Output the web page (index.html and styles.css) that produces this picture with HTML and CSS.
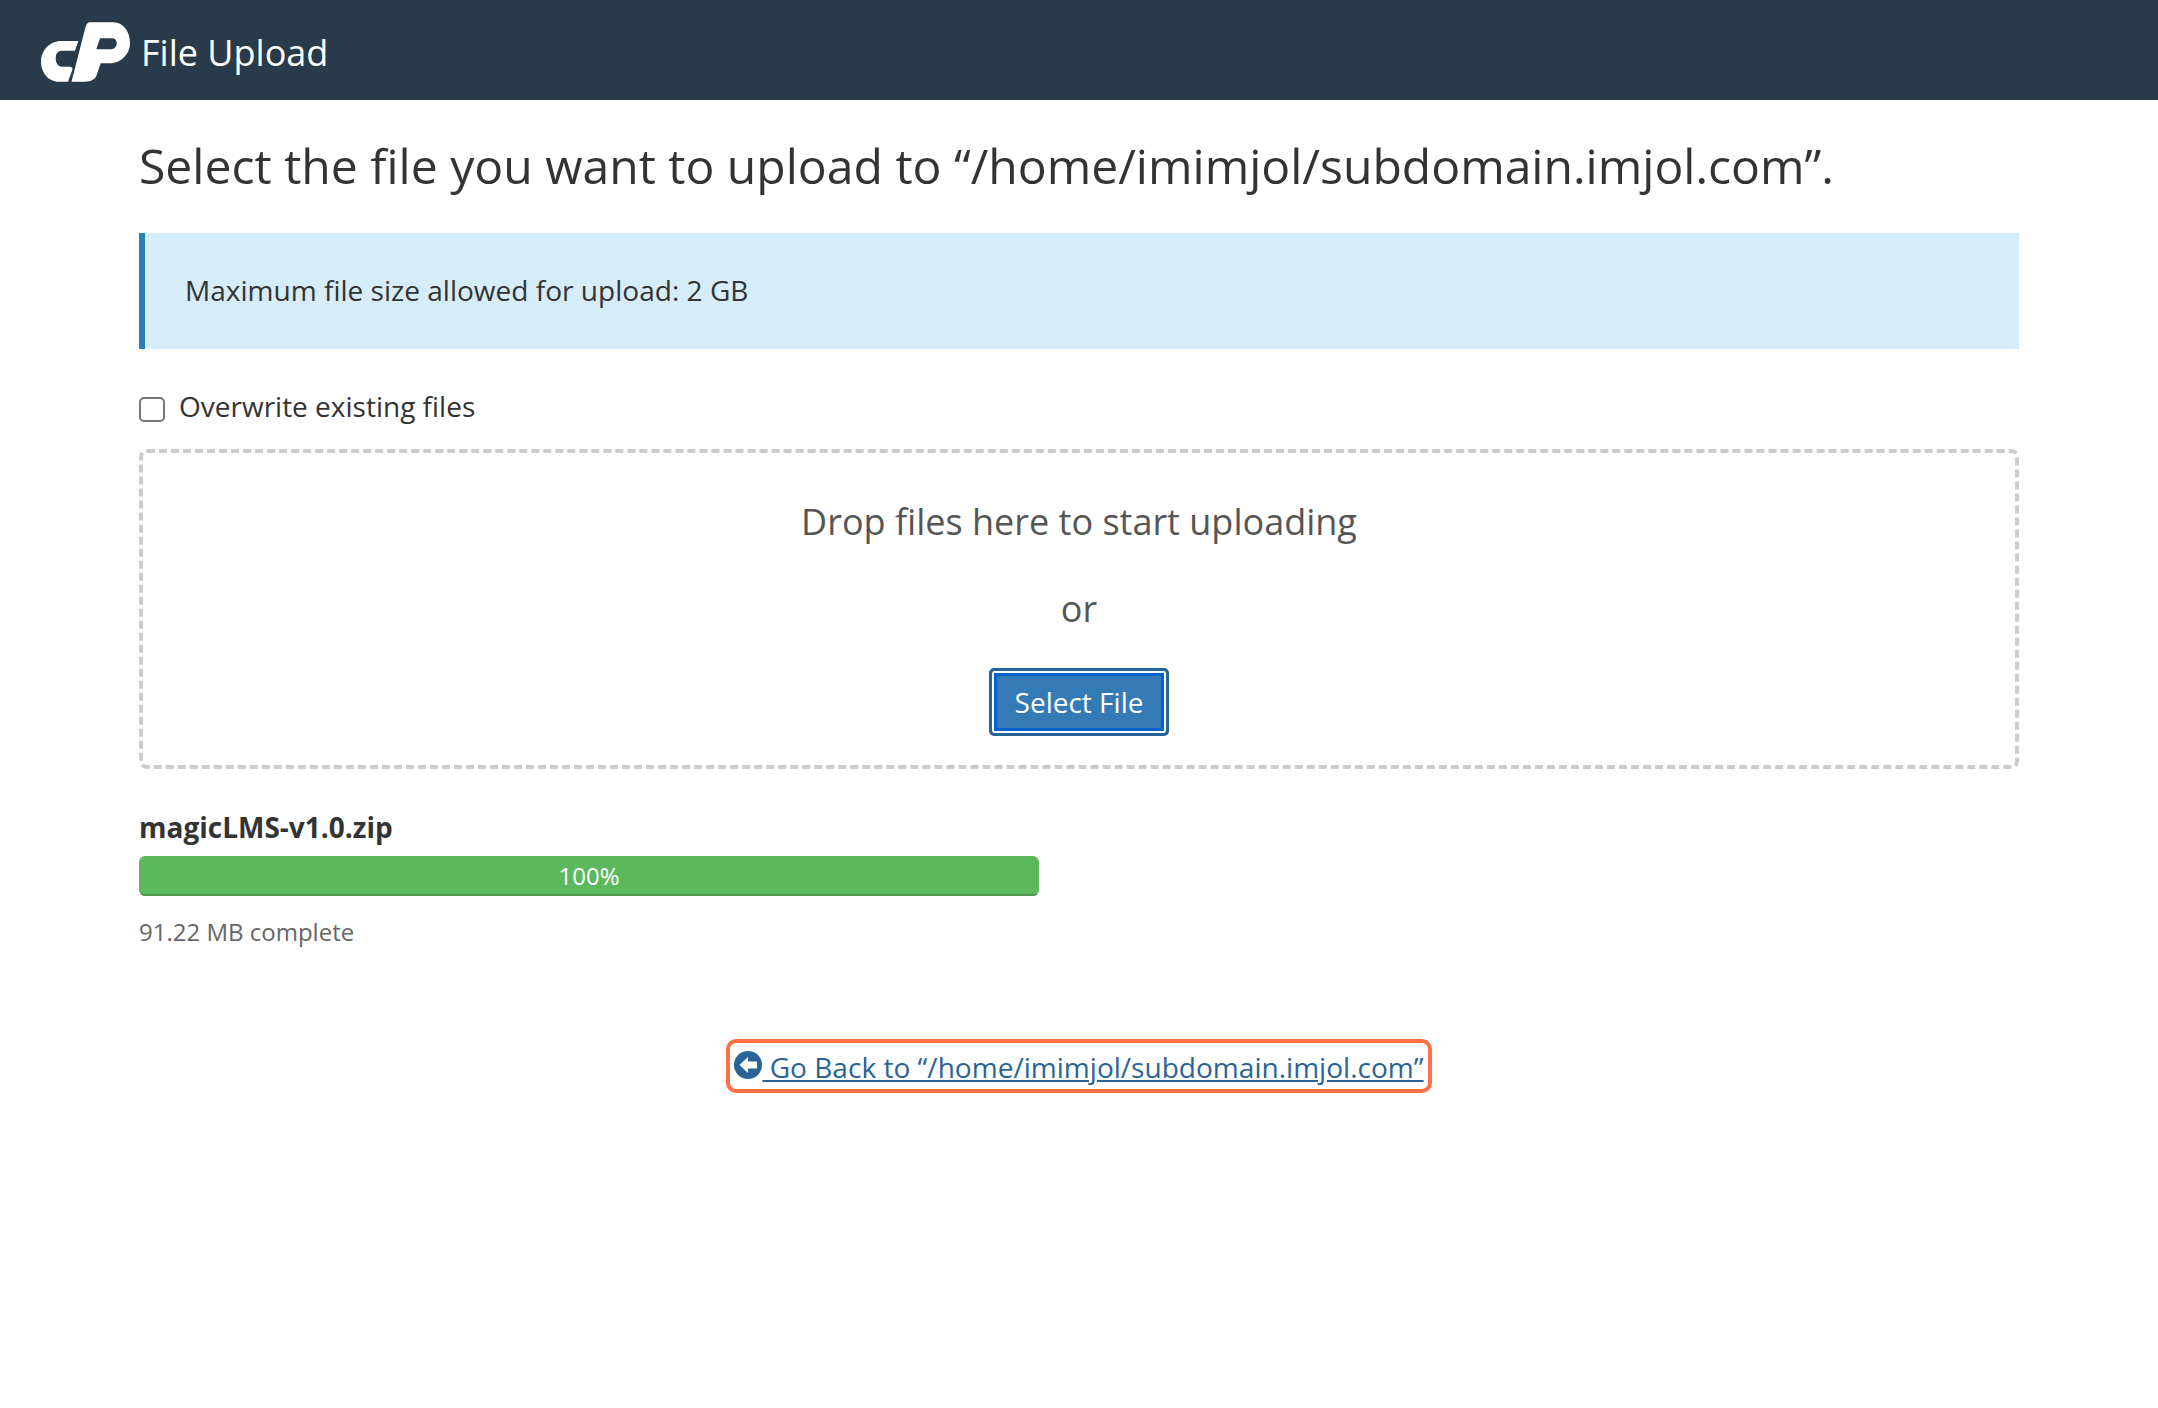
FILE: index.html
```html
<!DOCTYPE html>
<html lang="en">
<head>
    <meta charset="UTF-8">
    <title>File Upload</title>
    <link rel="stylesheet" href="styles.css">
</head>
<body>
    <header class="top-bar">
        <svg class="logo" viewBox="6 7 90 60" aria-hidden="true">
            <path fill="#fff" d="M43.3 26L40 35.7H27C22.5 35.7 20.7 39 20.7 43.5C20.7 48 23 51.7 27 51.7H34.5C37 51.7 38 53 37.3 55L33 66.7H24C13 66.7 6 57 6 46.7C6 35 15 26 26 26Z"/>
            <path fill="#fff" fill-rule="evenodd" d="M55 7.3H78.3C88 7.3 95 16 95 28.3C95 39 86 48.3 75 48.3H65.7L61.7 60C60.5 64 56 66.7 50 66.7H36.5L50 14C51 10 52.5 7.3 55 7.3ZM65 23.3L61.3 34.3H75C79 34.3 81.7 32 81.7 28.5C81.7 25.5 80 23.3 77.3 23.3Z"/>
        </svg>
        <span class="top-title">File Upload</span>
    </header>

    <main class="content">
        <h1 class="page-title">Select the file you want to upload to “/home/imimjol/subdomain.imjol.com”.</h1>

        <div class="notice">Maximum file size allowed for upload: 2 GB</div>

        <label class="overwrite">
            <input type="checkbox" class="overwrite-box">
            <span>Overwrite existing files</span>
        </label>

        <section class="drop-zone">
            <p class="drop-text">Drop files here to start uploading</p>
            <p class="drop-or">or</p>
            <button class="select-btn">Select File</button>
        </section>

        <section class="upload-item">
            <div class="file-name">magicLMS-v1.0.zip</div>
            <div class="progress">
                <div class="progress-fill" style="width: 100%">100%</div>
            </div>
            <div class="file-status">91.22 MB complete</div>
        </section>

        <div class="back-row">
            <a class="back-link" href="#">
                <svg class="back-icon" viewBox="0 0 28 28" aria-hidden="true">
                    <circle cx="14" cy="14" r="14" fill="#2a6496"/>
                    <path fill="#fff" d="M14 6L5.5 14L14 22V17.5H23V10.5H14Z"/>
                </svg>
                <span> Go Back to “/home/imimjol/subdomain.imjol.com”</span>
            </a>
        </div>
    </main>
</body>
</html>
```

FILE: styles.css
```css
* {
    box-sizing: border-box;
}
body {
    margin: 0;
    background: #fff;
    color: #333;
    font-family: "Open Sans", sans-serif;
}
.top-bar {
    display: flex;
    align-items: center;
    height: 100px;
    padding: 4px 0 0 41px;
    background: #293a4a;
    color: #fff;
}
.logo {
    width: 90px;
    height: 60px;
    margin-right: 10px;
}
.top-title {
    font-size: 36px;
}
.content {
    padding: 0 139px;
}
.page-title {
    margin: 0;
    padding-top: 33px;
    font-size: 48.08px;
    font-weight: 400;
    line-height: 66px;
}
.notice {
    display: flex;
    align-items: center;
    height: 116px;
    margin-top: 34px;
    padding: 0 0 2px 40px;
    border-left: 6px solid #2980b9;
    background: #d6ecf9;
    font-size: 28.06px;
}
.overwrite {
    display: flex;
    align-items: center;
    margin-top: 37px;
    font-size: 28px;
    line-height: 40px;
}
.overwrite-box {
    appearance: none;
    width: 26px;
    height: 25px;
    margin: 7px 14px 0 0;
    border: 2px solid #767676;
    border-radius: 5px;
    background: #fff;
}
.drop-zone {
    height: 320px;
    margin-top: 23px;
    padding-top: 43px;
    border: 4px dashed #ccc;
    border-radius: 8px;
    text-align: center;
    color: #555;
}
.drop-text,
.drop-or {
    margin: 0;
    font-size: 36px;
    line-height: 52px;
}
.drop-or {
    margin-top: 35px;
}
.select-btn {
    display: block;
    width: 180px;
    height: 68px;
    margin: 33px auto 0;
    border: 3px solid #2a6496;
    border-radius: 5px;
    background: #337ab7;
    box-shadow: inset 0 0 0 2px #fff, inset 0 0 0 5px #0062cc;
    color: #fff;
    font-family: inherit;
    font-size: 28px;
}
.upload-item {
    margin-top: 38px;
}
.file-name {
    font-size: 28px;
    font-weight: 700;
    line-height: 40px;
}
.progress {
    width: 900px;
    height: 40px;
    margin-top: 9px;
    border-radius: 6px;
    overflow: hidden;
}
.progress-fill {
    height: 100%;
    border-bottom: 2px solid #4c9a4c;
    background: #5cb85c;
    color: #fff;
    font-size: 24px;
    line-height: 40px;
    text-align: center;
}
.file-status {
    margin-top: 19px;
    color: #666;
    font-size: 24px;
    line-height: 34px;
}
.back-row {
    margin-top: 90px;
    text-align: center;
}
.back-link {
    display: inline-flex;
    align-items: center;
    height: 54px;
    padding: 1px 4px 0 4px;
    border: 4px solid #ff7045;
    border-radius: 10px;
    color: #2a6496;
    font-size: 28.06px;
    text-decoration: underline;
    white-space: pre;
}
.back-icon {
    width: 28px;
    height: 28px;
    margin-bottom: 4px;
}
```
